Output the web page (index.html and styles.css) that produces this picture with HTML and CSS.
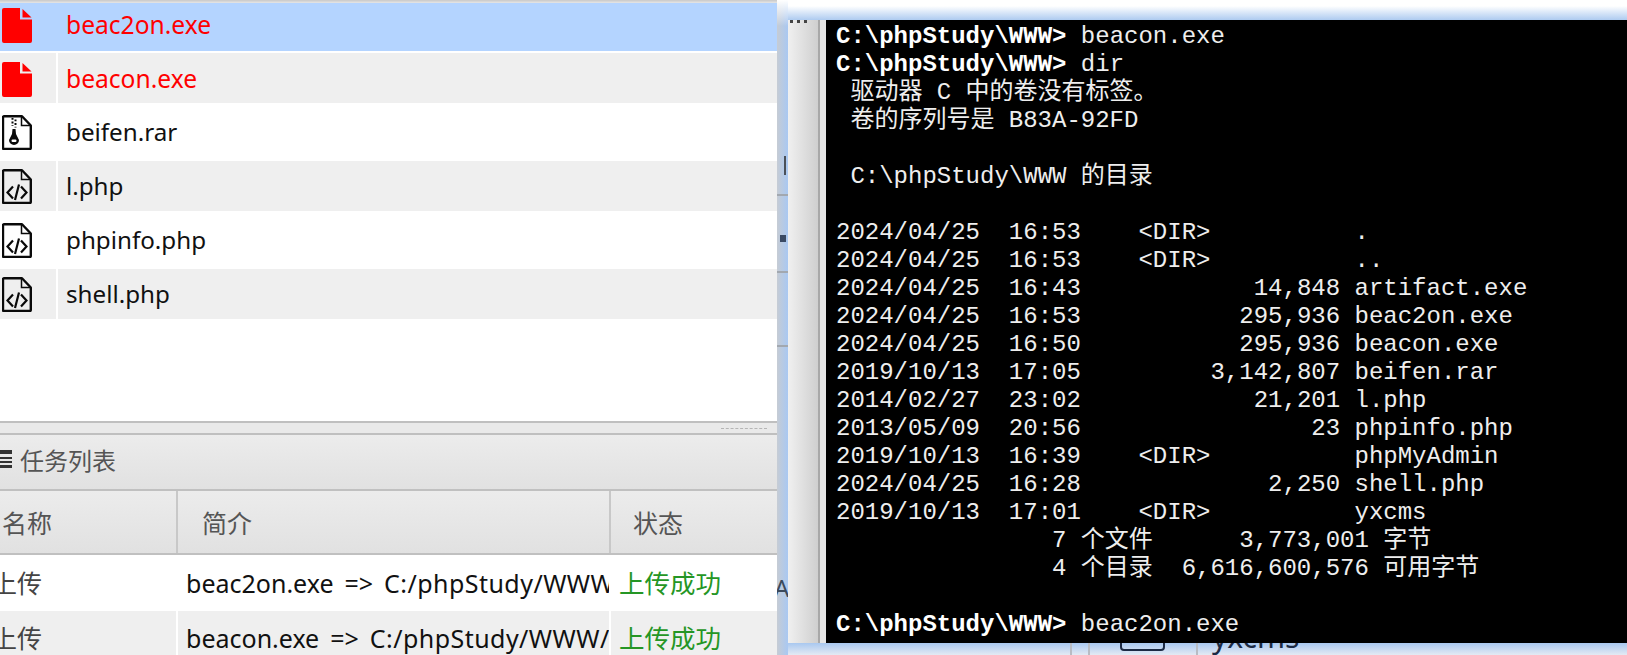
FILE: index.html
```html
<!DOCTYPE html>
<html lang="zh">
<head>
<meta charset="utf-8">
<title>任务列表</title>
<link rel="stylesheet" href="styles.css">
</head>
<body>
<svg class="defs" aria-hidden="true">
  <symbol id="i-red" viewBox="0 0 30 35">
    <path fill="#ff0000" d="M2 0H18V11.500H30V33a2 2 0 0 1-2 2H2a2 2 0 0 1-2-2V2a2 2 0 0 1 2-2Z"/>
    <path fill="#ff0000" d="M20.500 1L29.500 9.500H20.500Z"/>
  </symbol>
  <symbol id="i-zip" viewBox="0 0 30 35">
    <path fill="none" stroke="#0a0a0a" stroke-width="2.400" stroke-linejoin="round" d="M2 1.200H20L28.800 10.500V33a1 1 0 0 1-1 1H2a1 1 0 0 1-1-1V2.200a1 1 0 0 1 1-1Z"/>
    <path fill="none" stroke="#0a0a0a" stroke-width="1.500" d="M19.500 1.500V10.500H28.500"/>
    <path fill="none" stroke="#0a0a0a" stroke-width="2" stroke-dasharray="1.800 1.800" d="M10.500 3V11M13.500 4.500V12.500"/>
    <path fill="#0a0a0a" d="M10.500 14H13.500L14 19L17 25a5 5 0 1 1-10 0L10 19Z"/>
    <rect x="9.500" y="24.500" width="5" height="2.500" rx="1.200" fill="#ffffff"/>
  </symbol>
  <symbol id="i-code" viewBox="0 0 30 35">
    <path fill="none" stroke="#0a0a0a" stroke-width="2.400" stroke-linejoin="round" d="M2 1.200H20L28.800 10.500V33a1 1 0 0 1-1 1H2a1 1 0 0 1-1-1V2.200a1 1 0 0 1 1-1Z"/>
    <path fill="none" stroke="#0a0a0a" stroke-width="1.500" d="M19.500 1.500V10.500H28.500"/>
    <path fill="none" stroke="#0a0a0a" stroke-width="2.200" d="M11 17.500L5.500 23.500L11 29.500M19 17.500L24.500 23.500L19 29.500M17 15.500L13 31"/>
  </symbol>
</svg>

<div class="stage">
  <section class="panel">
    <div class="topshade"></div>
    <div class="files">
      <div class="frow selected">
        <div class="ficon"><svg class="fsvg"><use href="#i-red"/></svg></div>
        <div class="fname danger">beac2on.exe</div>
      </div>
      <div class="frow striped">
        <div class="ficon"><svg class="fsvg"><use href="#i-red"/></svg></div>
        <div class="fname danger">beacon.exe</div>
      </div>
      <div class="frow">
        <div class="ficon black"><svg class="fsvg"><use href="#i-zip"/></svg></div>
        <div class="fname">beifen.rar</div>
      </div>
      <div class="frow striped">
        <div class="ficon black"><svg class="fsvg"><use href="#i-code"/></svg></div>
        <div class="fname">l.php</div>
      </div>
      <div class="frow">
        <div class="ficon black"><svg class="fsvg"><use href="#i-code"/></svg></div>
        <div class="fname">phpinfo.php</div>
      </div>
      <div class="frow striped">
        <div class="ficon black"><svg class="fsvg"><use href="#i-code"/></svg></div>
        <div class="fname">shell.php</div>
      </div>
    </div>
    <div class="splitter"><span class="grip"></span></div>
    <div class="tasks-title">
      <svg class="tasks-icon" viewBox="0 0 12 18"><path fill="#333" d="M0 0H12V4H0ZM0 7H12V9H0ZM0 11H12V13H0ZM0 15H12V18H0Z"/></svg>
      <span>任务列表</span>
    </div>
    <div class="thead">
      <div class="c1 th"><span class="name-head">名称</span></div>
      <div class="c2 th"><span class="desc-head">简介</span></div>
      <div class="c3 th"><span class="state-head">状态</span></div>
    </div>
    <div class="trow">
      <div class="c1 td"><span class="cut">上传</span></div>
      <div class="c2 td desc">beac2on.exe =&gt; <span class="path">C:/phpStudy/WWW/</span></div>
      <div class="c3 td ok">上传成功</div>
    </div>
    <div class="trow striped">
      <div class="c1 td"><span class="cut">上传</span></div>
      <div class="c2 td desc">beacon.exe =&gt; <span class="path">C:/phpStudy/WWW/</span></div>
      <div class="c3 td ok">上传成功</div>
    </div>
  </section>

  <div class="gutter">
    <span class="g-line g1"></span>
    <span class="g-line g2"></span>
    <span class="g-line g3"></span>
    <span class="g-mark"></span>
    <span class="g-square"></span>
    <span class="g-text">AC</span>
  </div>

  <div class="right">
    <div class="strip-top"></div>
    <div class="window">
      <div class="side"><span class="dots"></span></div>
      <pre class="console"><b>C:\phpStudy\WWW&gt;</b> beacon.exe
<b>C:\phpStudy\WWW&gt;</b> dir
 驱动器 C 中的卷没有标签。
 卷的序列号是 B83A-92FD

 C:\phpStudy\WWW 的目录

2024/04/25  16:53    &lt;DIR&gt;          .
2024/04/25  16:53    &lt;DIR&gt;          ..
2024/04/25  16:43            14,848 artifact.exe
2024/04/25  16:53           295,936 beac2on.exe
2024/04/25  16:50           295,936 beacon.exe
2019/10/13  17:05         3,142,807 beifen.rar
2014/02/27  23:02            21,201 l.php
2013/05/09  20:56                23 phpinfo.php
2019/10/13  16:39    &lt;DIR&gt;          phpMyAdmin
2024/04/25  16:28             2,250 shell.php
2019/10/13  17:01    &lt;DIR&gt;          yxcms
               7 个文件      3,773,001 字节
               4 个目录  6,616,600,576 可用字节

<b>C:\phpStudy\WWW&gt;</b> beac2on.exe</pre>
    </div>
    <div class="strip-bottom">
      <span class="under-line u1"></span>
      <span class="under-line u2"></span>
      <span class="under-line u3"></span>
      <span class="under-box"></span>
      <span class="under-text">yxcms</span>
    </div>
  </div>
</div>
</body>
</html>
```

FILE: styles.css
```css
* { box-sizing: border-box; }
html, body { margin: 0; padding: 0; }
body {
  width: 1627px;
  height: 655px;
  overflow: hidden;
  background: #fff;
  font-family: "Noto Sans", "Noto Sans CJK SC", sans-serif;
}
.defs { display: none; }
.stage { display: flex; width: 1627px; height: 655px; }

/* left panel */
.panel {
  position: relative;
  width: 777px;
  height: 655px;
  flex: none;
  overflow: hidden;
  background: #fff;
  display: flex;
  flex-direction: column;
  font-size: 25px;
  color: #111;
}
.topshade {
  position: absolute;
  left: 0; top: 0; right: 0;
  height: 3px;
  background: linear-gradient(#c8c8c8, #e6e6e6);
  z-index: 1;
}
.files {
  height: 422px;
  margin-top: -1px;
  flex: none;
  display: flex;
  flex-direction: column;
  gap: 4px;
}
.frow {
  display: flex;
  height: 50px;
  flex: none;
  gap: 2px;
}
.frow.selected { height: 52px; margin-bottom: -2px; background: #b4d4ff; }
.striped > div { background: #efefef; }
.ficon { width: 56px; flex: none; padding: 9px 0 0 2px; }
.ficon.black { padding-top: 8px; }
.fsvg { display: block; width: 30px; height: 35px; }
.fname {
  flex: 1;
  padding-left: 8px;
  font-size: 24.2px;
  line-height: 50px;
}
.fname.danger { color: #ff0000; font-size: 24.6px; line-height: 52px; }

.splitter {
  height: 14px;
  flex: none;
  background: #e9e9e9;
  border-top: 2px solid #bfbfbf;
  border-bottom: 2px solid #bfbfbf;
  display: flex;
  justify-content: flex-end;
  align-items: center;
  padding-right: 10px;
}
.grip {
  width: 46px;
  height: 0;
  border-top: 1px dashed #b5b5b5;
}
.tasks-title {
  height: 56px;
  flex: none;
  display: flex;
  align-items: center;
  gap: 8px;
  padding-bottom: 6px;
  font-size: 24px;
  background: linear-gradient(#ececec, #e1e1e1);
  border-bottom: 2px solid #c0c0c0;
  color: #555;
}
.tasks-icon { width: 12px; height: 18px; flex: none; }
.thead {
  display: flex;
  height: 64px;
  flex: none;
  background: linear-gradient(#ececec, #e1e1e1);
  border-bottom: 2px solid #c0c0c0;
  color: #555;
}
.trow { display: flex; height: 56px; flex: none; }
.trow.striped { height: 50px; }
.c1 { width: 178px; flex: none; }
.c2 { width: 433px; flex: none; }
.c3 { flex: 1; }
.th {
  display: flex;
  align-items: center;
  border-right: 2px solid #c8c8c8;
}
.th.c3 { border-right: 0; }
.name-head { padding-left: 2px; }
.desc-head { padding-left: 24px; }
.state-head { padding-left: 22px; }
.td {
  line-height: 56px;
  border-right: 2px solid #fff;
  overflow: hidden;
  white-space: nowrap;
}
.striped .td { line-height: 54px; }
.cut { display: block; margin-left: -8px; color: #444; }
.desc { padding-left: 8px; word-spacing: 4.500px; }
.path { letter-spacing: 0.450px; }
.ok { padding-left: 8px; font-size: 25.5px; color: #259625; border-right: 0; }

/* sliver of the desktop between the windows */
.gutter {
  position: relative;
  width: 11px;
  flex: none;
  overflow: hidden;
  background:
    linear-gradient(#fff 0, rgba(255,255,255,0) 26px),
    linear-gradient(90deg, #c6ccd4, #a9c8f2);
}
.g-line { position: absolute; left: 0; right: 0; height: 2px; background: #a2a8b0; }
.g1 { top: 194px; }
.g2 { top: 271px; }
.g3 { top: 345px; }
.g-mark { position: absolute; left: 7px; top: 156px; width: 3px; height: 19px; border-left: 2px solid #4a5058; }
.g-square { position: absolute; left: 3px; top: 235px; width: 6px; height: 7px; background: #3a4a64; }
.g-text {
  position: absolute;
  left: -3px;
  top: 572px;
  font-size: 24px;
  line-height: 32px;
  color: #3c4a5c;
}

/* terminal window */
.right { flex: 1; display: flex; flex-direction: column; min-width: 0; }
.strip-top { height: 20px; flex: none; background: linear-gradient(#fff 0, #fff 6px, #aecbf0 20px); }
.window { display: flex; height: 623px; flex: none; background: #000; }
.side {
  position: relative;
  width: 38px;
  flex: none;
  background: linear-gradient(90deg, #f0f0f0, #cfcfcf 30px, #a8a8a8 30px, #a8a8a8 32px, #e6e6e6 32px);
}
.dots {
  position: absolute;
  left: 2px; top: 0;
  width: 20px; height: 3px;
  background: repeating-linear-gradient(90deg, #444 0 3px, transparent 3px 7px);
}
.console {
  flex: 1;
  margin: 0;
  padding: 3px 0 0 10px;
  overflow: hidden;
  font-family: "Liberation Mono", "Noto Sans CJK SC", monospace;
  font-size: 24px;
  line-height: 28px;
  color: #eeeeee;
  white-space: pre;
}
.console b { color: #fff; font-weight: 700; }
.strip-bottom {
  position: relative;
  flex: 1;
  overflow: hidden;
  background: linear-gradient(#a9c8f0, #e4eaf3);
}
.under-line { position: absolute; top: 0; bottom: 0; width: 2px; background: #b8bcc4; }
.u1 { left: 282px; }
.u2 { left: 300px; }
.u3 { left: 408px; }
.under-box {
  position: absolute;
  left: 332px;
  top: -12px;
  width: 45px;
  height: 20px;
  border: 2px solid #1c2a44;
  border-radius: 4px;
}
.under-text {
  position: absolute;
  left: 424px;
  top: -22px;
  font-size: 30px;
  line-height: 32px;
  color: #1c2a44;
}
```
